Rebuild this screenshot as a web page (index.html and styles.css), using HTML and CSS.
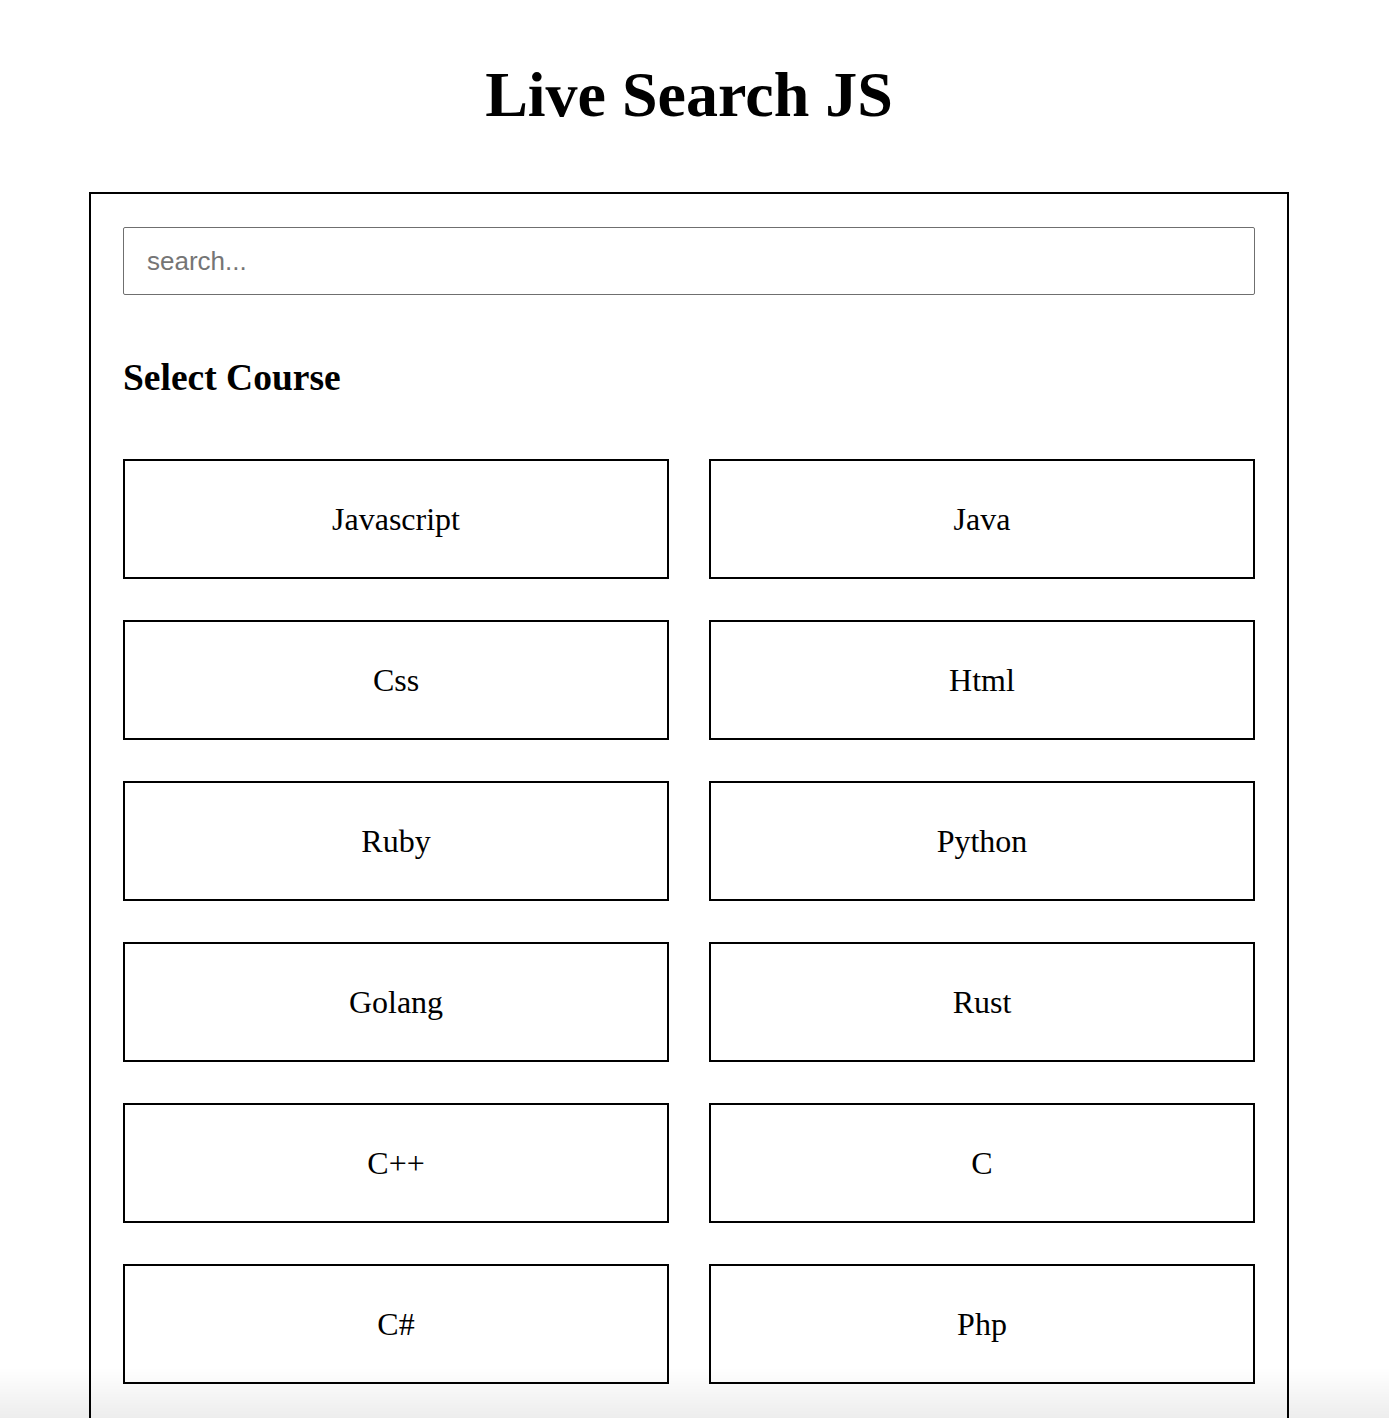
FILE: index.html
```html
<!DOCTYPE html>
<html lang="en">
<head>
<meta charset="UTF-8">
<title>Live Search JS</title>
<link rel="stylesheet" href="styles.css">
</head>
<body>
<h1 class="title">Live Search JS</h1>
<div class="panel">
  <input class="search" type="text" placeholder="search...">
  <h2 class="subtitle">Select Course</h2>
  <div class="courses">
    <div class="course">Javascript</div>
    <div class="course">Java</div>
    <div class="course">Css</div>
    <div class="course">Html</div>
    <div class="course">Ruby</div>
    <div class="course">Python</div>
    <div class="course">Golang</div>
    <div class="course">Rust</div>
    <div class="course">C++</div>
    <div class="course">C</div>
    <div class="course">C#</div>
    <div class="course">Php</div>
  </div>
</div>
<div class="fade"></div>
</body>
</html>
```
FILE: styles.css
```css
* { box-sizing: border-box; }
body {
  margin: 0;
  padding: 0 11px 0 0;
  font-family: "Liberation Serif", "Times New Roman", serif;
  color: #000;
  background: #fff;
}
.title {
  margin: 58px 0 60px;
  font-size: 64px;
  line-height: 74px;
  font-weight: bold;
  text-align: center;
}
.panel {
  width: 1200px;
  margin: 0 auto;
  border: 2px solid #000;
  padding: 33px 32px 48px;
}
.search {
  display: block;
  width: 100%;
  height: 68px;
  border: 1px solid #6f6f6f;
  border-radius: 2px;
  padding: 0 23px;
  font-family: "Liberation Sans", Arial, sans-serif;
  font-size: 26px;
  color: #000;
  outline: none;
}
.search::placeholder { color: #757575; }
.subtitle {
  margin: 61px 0 60px;
  font-size: 37.5px;
  line-height: 43px;
  font-weight: bold;
}
.courses {
  display: grid;
  grid-template-columns: 1fr 1fr;
  column-gap: 40px;
  row-gap: 41px;
}
.course {
  height: 120px;
  border: 2px solid #000;
  display: flex;
  align-items: center;
  justify-content: center;
  font-size: 32px;
}
.fade {
  position: fixed;
  left: 0;
  right: 0;
  bottom: 0;
  height: 50px;
  background: linear-gradient(rgba(0,0,0,0), rgba(0,0,0,0.07));
  pointer-events: none;
}
```
